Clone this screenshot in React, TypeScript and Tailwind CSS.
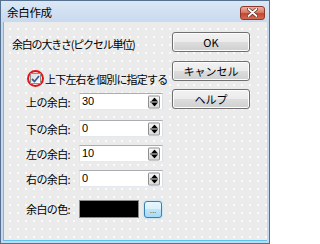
const jp = "font-['Noto_Sans_CJK_JP','Noto_Sans',sans-serif]";

const Spinner = () => (
    <div className="absolute right-[2px] top-1/2 -translate-y-1/2 w-[12px] h-[13px] border border-[#8e8f8f] rounded-[1px] bg-gradient-to-b from-[#f6f6f6] to-[#d8d8d8] flex flex-col items-center justify-between py-[1px]">
        <svg width="7" height="4" viewBox="0 0 7 4">
            <path d="M3.5 0 L7 4 L0 4 Z" fill="#000" />
        </svg>
        <div className="w-[8px] h-px bg-[#444]" />
        <svg width="7" height="4" viewBox="0 0 7 4">
            <path d="M0 0 L7 0 L3.5 4 Z" fill="#000" />
        </svg>
    </div>
);

const MarginRow = ({ label, value, mt }: { label: string; value: string; mt: string }) => (
    <div className={`flex items-center ${mt}`}>
        <span className={`w-[53px] ml-[14px] text-[11px] leading-[14px] tracking-[-0.6px] text-black ${jp}`}>{label}</span>
        <div className="relative w-[84px] h-[17px] bg-white border border-[#abadb3] border-r-[#dbdfe6] border-b-[#e3e9ef] border-l-[#e2e3ea]">
            <span className="absolute left-[2px] top-[1px] text-[11px] leading-[13px] font-['Liberation_Sans',sans-serif] text-black">{value}</span>
            <Spinner />
        </div>
    </div>
);

const WinButton = ({ label, mt }: { label: string; mt: string }) => (
    <button
        className={`w-[78px] h-[20px] ${mt} rounded-[3px] border border-[#707070] bg-[linear-gradient(#f2f2f2_0%,#ebebeb_50%,#dddddd_50%,#cfcfcf_100%)] shadow-[inset_0_0_0_1px_#fcfcfc] text-[11px] leading-[18px] text-black ${jp}`}
    >
        {label}
    </button>
);

export default function App() {
    return (
        <div className="w-[270px] h-[244px] bg-[#c5d8ee] border border-[#56708f] flex flex-col">
            {/* title bar */}
            <div className="h-[21px] flex items-center justify-between pl-[6px] pr-[4px] bg-gradient-to-b from-[#dbe7f5] to-[#c8daef]">
                <span className={`text-[11.5px] leading-[14px] text-black tracking-[-0.3px] ${jp}`}>余白作成</span>
                <div className="w-[25px] h-[14px] mt-[2px] rounded-[3px] border border-[#8b3a2c] bg-[linear-gradient(#eab0a3_0%,#d97a66_45%,#c7452f_55%,#d46a4f_100%)] flex items-center justify-center">
                    <svg width="11" height="9" viewBox="0 0 11 9">
                        <path d="M1.5 1 L9.5 8 M9.5 1 L1.5 8" stroke="#5a2a20" strokeWidth="3.2" strokeLinecap="round" />
                        <path d="M1.5 1 L9.5 8 M9.5 1 L1.5 8" stroke="#ffffff" strokeWidth="1.8" strokeLinecap="round" />
                    </svg>
                </div>
            </div>

            {/* client */}
            <div className="flex-1 mx-[2px] mb-[2px] border-l border-b border-[#5ec4ee] flex bg-[#ebebeb] bg-[radial-gradient(circle,#fbfbfb_1.1px,transparent_1.4px)] [background-size:8px_8px] [background-position:2px_3px]">
                <div className="w-[168px] pl-[8px] flex flex-col">
                    <span className={`mt-[15px] text-[11px] leading-[14px] tracking-[-1.2px] text-black ${jp}`}>
                        余白の大きさ(ピクセル単位)
                    </span>

                    <div className="flex items-center mt-[19px] ml-[15px]">
                        <div className="w-[17px] h-[17px] rounded-full border-2 border-[#e0141a] flex items-center justify-center">
                            <div className="w-[11px] h-[11px] border border-[#8e8f8f] bg-gradient-to-br from-[#dcdcdc] to-[#fcfcfc] flex items-center justify-center">
                                <svg width="9" height="8" viewBox="0 0 9 8">
                                    <path d="M1 4 L3.5 6.5 L8 1" stroke="#3d5d92" strokeWidth="1.8" fill="none" />
                                </svg>
                            </div>
                        </div>
                        <span className={`ml-[1px] text-[11px] leading-[14px] tracking-[-0.8px] text-black ${jp}`}>
                            上下左右を個別に指定する
                        </span>
                    </div>

                    <MarginRow label="上の余白:" value="30" mt="mt-[6px]" />
                    <MarginRow label="下の余白:" value="0" mt="mt-[10px]" />
                    <MarginRow label="左の余白:" value="10" mt="mt-[8px]" />
                    <MarginRow label="右の余白:" value="0" mt="mt-[8px]" />

                    <div className="flex items-center mt-[13px]">
                        <span className={`w-[53px] ml-[14px] text-[11px] leading-[14px] tracking-[-0.6px] text-black ${jp}`}>余白の色:</span>
                        <div className="w-[60px] h-[18px] bg-black border border-[#8a8a8a]" />
                        <button className="ml-[5px] w-[18px] h-[17px] rounded-[3px] border border-[#3c7fb1] bg-[linear-gradient(#eaf6fd_0%,#d9f0fc_50%,#bee6fd_50%,#a7d9f5_100%)] shadow-[0_0_2px_#7fd0f7] flex items-end justify-center pb-[3px]">
                            <span className="text-[8px] leading-[6px] font-['Liberation_Sans',sans-serif] text-[#333]">...</span>
                        </button>
                    </div>
                </div>

                <div className="flex flex-col">
                    <WinButton label="OK" mt="mt-[10px]" />
                    <WinButton label="キャンセル" mt="mt-[9px]" />
                    <WinButton label="ヘルプ" mt="mt-[8px]" />
                </div>
            </div>
        </div>
    );
}
